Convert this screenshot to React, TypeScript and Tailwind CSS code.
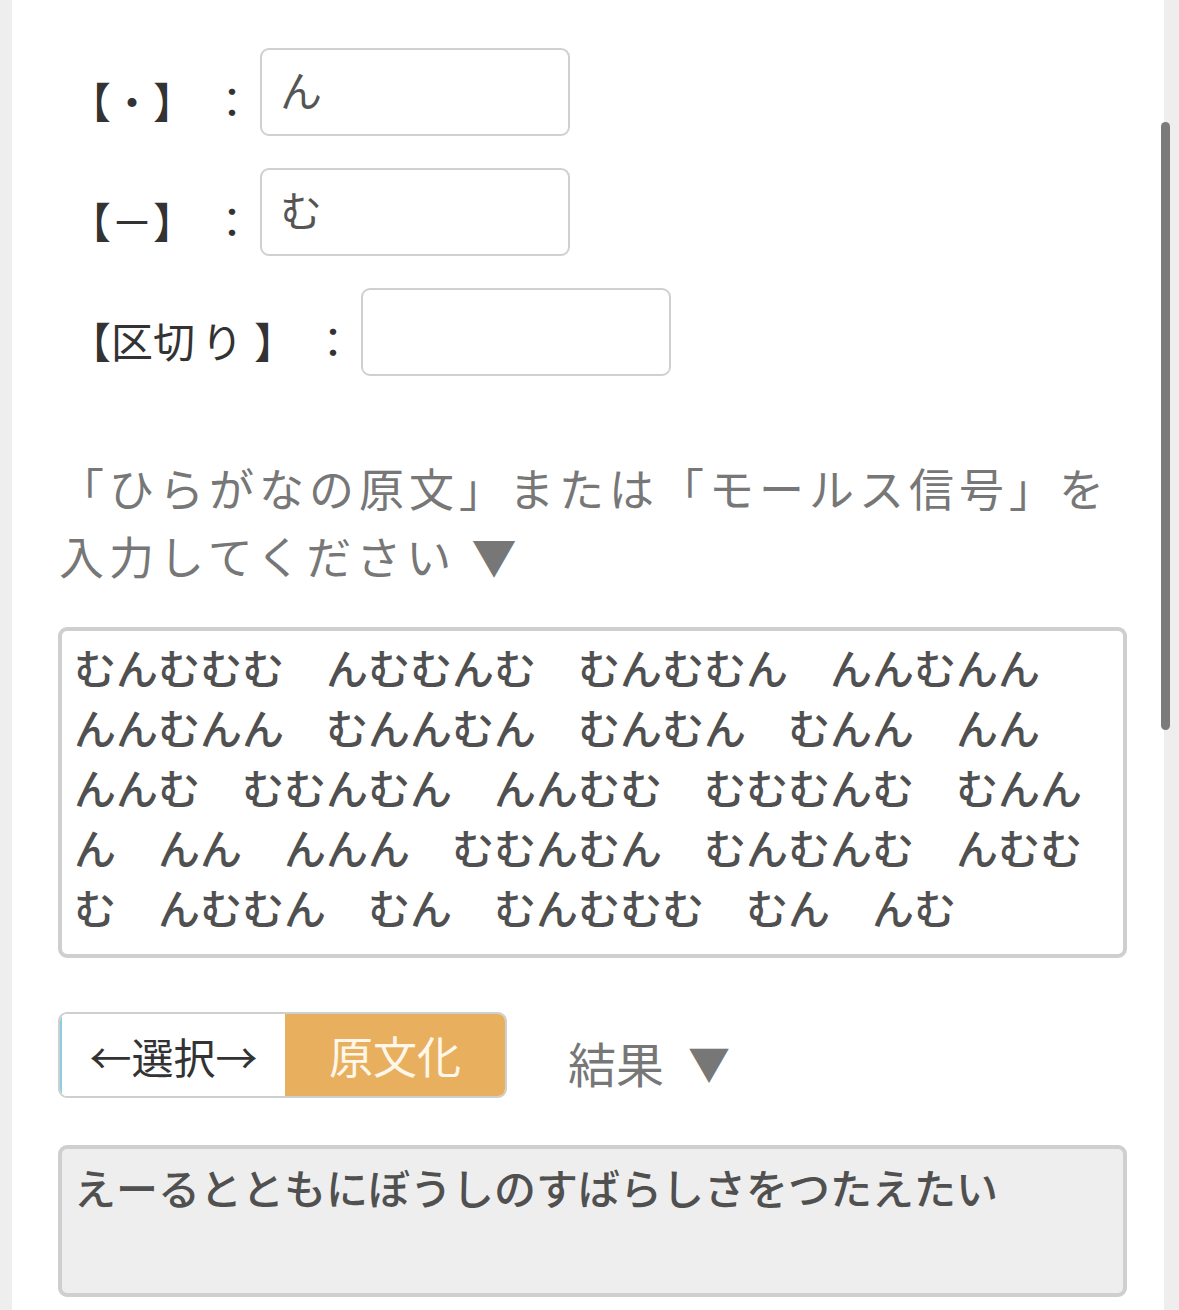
const morse = [
  "むんむむむ　んむむんむ　むんむむん　んんむんん",
  "んんむんん　むんんむん　むんむん　むんん　んん",
  "んんむ　むむんむん　んんむむ　むむむんむ　むんん",
  "ん　んん　んんん　むむんむん　むんむんむ　んむむ",
  "む　んむむん　むん　むんむむむ　むん　んむ",
]

const SymbolRow = ({ label, value, colonGap }: { label: React.ReactNode; value: string; colonGap: string }) => {
  return (
    <div className="flex items-center h-[88px] ml-[11px]">
      <span className="mt-[16px] text-[42px] leading-none text-[#333] whitespace-nowrap">{label}</span>
      <span className={`mt-[16px] text-[42px] leading-none text-[#333] ${colonGap}`}>：</span>
      <input
        readOnly
        defaultValue={value}
        className="ml-[7px] h-[88px] w-[310px] rounded-[9px] border-2 border-[#d0d0d0] bg-white pl-[18px] pb-[8px] text-[42px] text-[#555] outline-none"
      />
    </div>
  )
}

export default function App() {
  return (
    <div className="relative h-screen overflow-hidden bg-[#eeeeee] font-['Noto_Sans_CJK_JP',sans-serif]">
      <div className="ml-[12px] w-[1152px] h-full bg-white pl-[46px] pr-[37px] pt-[48px]">
        {/* symbol settings */}
        <div className="flex flex-col gap-[32px]">
          <SymbolRow label="【・】" value="ん" colonGap="ml-[16px]" />
          <SymbolRow label="【－】" value="む" colonGap="ml-[16px]" />
          <SymbolRow
            label={
              <>
                【区切<span className="ml-[6px]">り</span>
                <span className="ml-[11px]">】</span>
              </>
            }
            value=""
            colonGap="ml-[16px]"
          />
        </div>

        {/* instruction */}
        <div className="mt-[78px] ml-[1px] text-[45px] leading-[68px] tracking-[5px] text-[#777] whitespace-nowrap">
          <div>「ひらがなの原文」または「モールス信号」を</div>
          <div>
            入力してください <span className="tracking-normal">▼</span>
          </div>
        </div>

        {/* input textarea */}
        <div className="mt-[37px] h-[331px] rounded-[9px] border-4 border-[#cfcfcf] bg-white pl-[12px] pt-[6px] text-[42px] leading-[60px] font-medium text-[#505050] whitespace-pre">
          {morse.map((line, i) => (
            <div key={i}>{line}</div>
          ))}
        </div>

        {/* actions */}
        <div className="mt-[54px] flex items-center">
          <div className="flex h-[86px] w-[449px] overflow-hidden rounded-[9px] border-2 border-[#cfcfcf]">
            <button className="flex w-[225px] items-center justify-center border-l-2 border-[#8ccde2] bg-white text-[42px] text-[#333]">
              ←選択→
            </button>
            <button className="flex flex-1 items-center justify-center bg-[#e8b05e] text-[44px] text-[#fff7ea]">
              原文化
            </button>
          </div>
          <div className="ml-[61px] mt-[14px] flex items-center text-[48px] leading-none text-[#777]">
            結果<span className="ml-[24px] text-[42px]">▼</span>
          </div>
        </div>

        {/* result */}
        <div className="mt-[47px] h-[152px] rounded-[9px] border-4 border-[#cfcfcf] bg-[#eeeeee] pl-[12px] pt-[8px] text-[42px] leading-[60px] font-medium text-[#505050]">
          えーるとともにぼうしのすばらしさをつたえたい
        </div>
      </div>

      {/* overlay scrollbar */}
      <div className="absolute left-[1161px] top-[122px] h-[608px] w-[9px] rounded-full bg-[#7b7b7b]" />
    </div>
  )
}
